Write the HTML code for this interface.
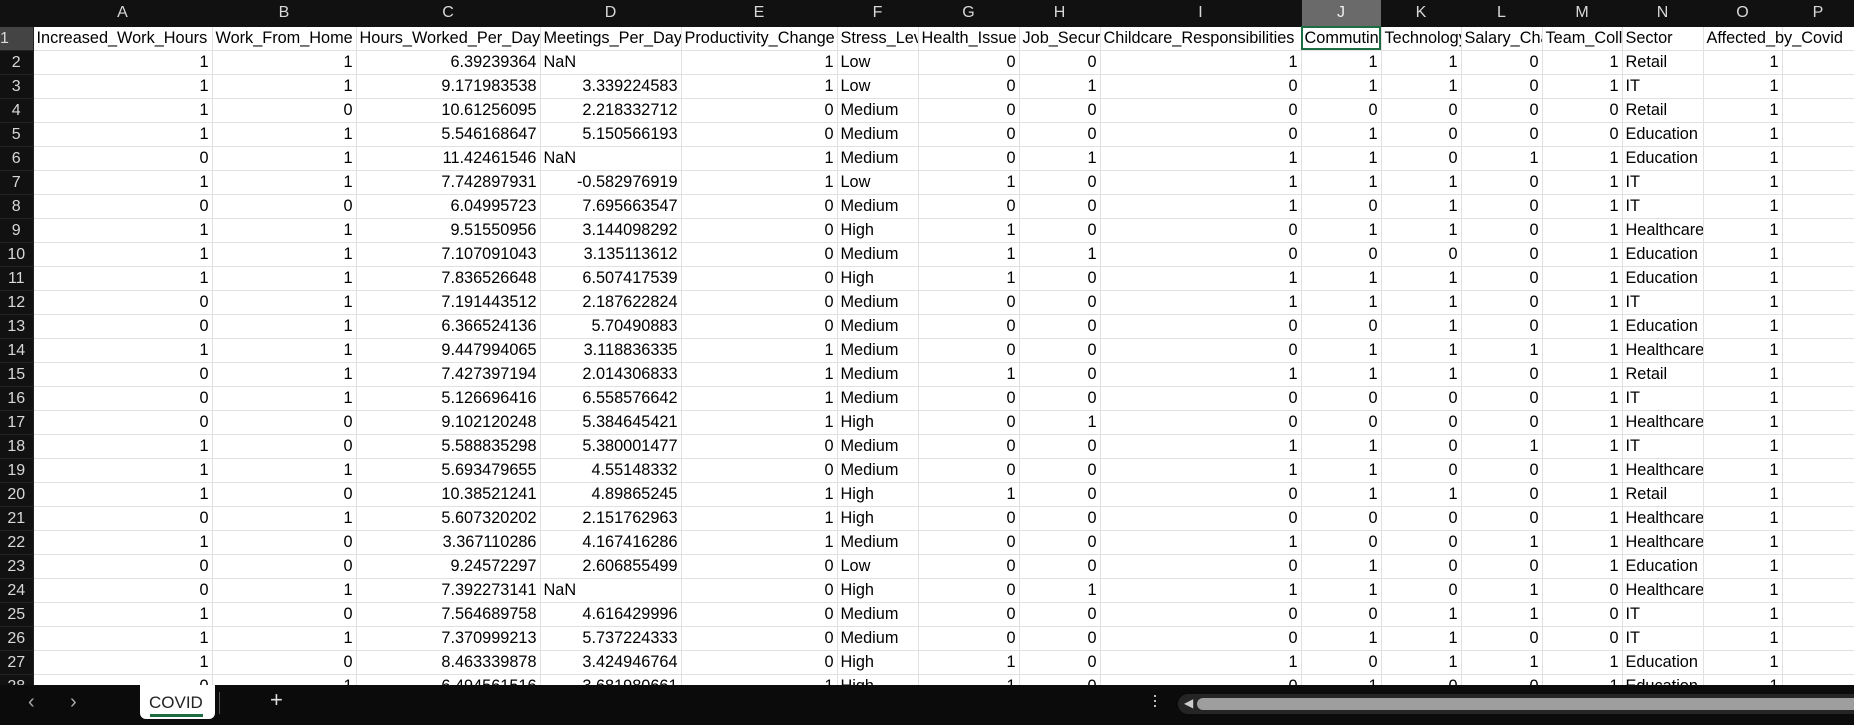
<!DOCTYPE html>
<html><head><meta charset="utf-8"><style>
html,body{margin:0;padding:0;background:#fff;width:1854px;height:725px;overflow:hidden;font-family:"Liberation Sans",sans-serif;}
#wrap{position:absolute;left:0;top:0;width:1854px;height:685px;overflow:hidden;background:#fff}
table{border-collapse:collapse;table-layout:fixed;width:1854px}
tr{height:24px}
td{height:23px;padding:0 3px;border-right:1px solid #e1e1e1;border-bottom:1px solid #e1e1e1;white-space:nowrap;overflow:hidden;font-size:16.3px;color:#000;line-height:23px;text-align:right;letter-spacing:0}
td.t{text-align:left}
tr.h{height:26px}
tr.h td{height:25px;background:#111;color:#d8d8d8;text-align:center;border-color:#111;font-size:16px}
tr.h td.sel{background:#6a6a6a;color:#eee}
td.r{background:#111;color:#d8d8d8;text-align:center;border-color:#222;padding:0;font-size:16px}
td.r.s{background:#444}
tr.f td{text-align:left}
td.j1{outline:2px solid #1e6c41;outline-offset:-2px}
td.ov{overflow:visible}
#bar{position:absolute;left:0;top:685px;width:1854px;height:40px;background:#0b0b0b;color:#ccc}
</style></head><body>
<div id="wrap"><table>
<colgroup><col style="width:33px"><col style="width:179px"><col style="width:144px"><col style="width:184px"><col style="width:141px"><col style="width:156px"><col style="width:81px"><col style="width:101px"><col style="width:81px"><col style="width:201px"><col style="width:80px"><col style="width:80px"><col style="width:81px"><col style="width:80px"><col style="width:81px"><col style="width:79px"><col style="width:72px"></colgroup>
<tr class="h"><td></td><td>A</td><td>B</td><td>C</td><td>D</td><td>E</td><td>F</td><td>G</td><td>H</td><td>I</td><td class="sel">J</td><td>K</td><td>L</td><td>M</td><td>N</td><td>O</td><td>P</td></tr>
<tr class="f"><td class="r s">1</td><td>Increased_Work_Hours</td><td>Work_From_Home</td><td>Hours_Worked_Per_Day</td><td>Meetings_Per_Day</td><td>Productivity_Change</td><td>Stress_Level</td><td>Health_Issue</td><td>Job_Security</td><td>Childcare_Responsibilities</td><td class="j1">Commuting_Changes</td><td>Technology_Adaptation</td><td>Salary_Changes</td><td>Team_Collaboration</td><td>Sector</td><td class="ov">Affected_by_Covid</td><td></td></tr>
<tr><td class="r">2</td><td>1</td><td>1</td><td>6.39239364</td><td class="t">NaN</td><td>1</td><td class="t">Low</td><td>0</td><td>0</td><td>1</td><td>1</td><td>1</td><td>0</td><td>1</td><td class="t">Retail</td><td>1</td><td></td></tr>
<tr><td class="r">3</td><td>1</td><td>1</td><td>9.171983538</td><td>3.339224583</td><td>1</td><td class="t">Low</td><td>0</td><td>1</td><td>0</td><td>1</td><td>1</td><td>0</td><td>1</td><td class="t">IT</td><td>1</td><td></td></tr>
<tr><td class="r">4</td><td>1</td><td>0</td><td>10.61256095</td><td>2.218332712</td><td>0</td><td class="t">Medium</td><td>0</td><td>0</td><td>0</td><td>0</td><td>0</td><td>0</td><td>0</td><td class="t">Retail</td><td>1</td><td></td></tr>
<tr><td class="r">5</td><td>1</td><td>1</td><td>5.546168647</td><td>5.150566193</td><td>0</td><td class="t">Medium</td><td>0</td><td>0</td><td>0</td><td>1</td><td>0</td><td>0</td><td>0</td><td class="t">Education</td><td>1</td><td></td></tr>
<tr><td class="r">6</td><td>0</td><td>1</td><td>11.42461546</td><td class="t">NaN</td><td>1</td><td class="t">Medium</td><td>0</td><td>1</td><td>1</td><td>1</td><td>0</td><td>1</td><td>1</td><td class="t">Education</td><td>1</td><td></td></tr>
<tr><td class="r">7</td><td>1</td><td>1</td><td>7.742897931</td><td>-0.582976919</td><td>1</td><td class="t">Low</td><td>1</td><td>0</td><td>1</td><td>1</td><td>1</td><td>0</td><td>1</td><td class="t">IT</td><td>1</td><td></td></tr>
<tr><td class="r">8</td><td>0</td><td>0</td><td>6.04995723</td><td>7.695663547</td><td>0</td><td class="t">Medium</td><td>0</td><td>0</td><td>1</td><td>0</td><td>1</td><td>0</td><td>1</td><td class="t">IT</td><td>1</td><td></td></tr>
<tr><td class="r">9</td><td>1</td><td>1</td><td>9.51550956</td><td>3.144098292</td><td>0</td><td class="t">High</td><td>1</td><td>0</td><td>0</td><td>1</td><td>1</td><td>0</td><td>1</td><td class="t">Healthcare</td><td>1</td><td></td></tr>
<tr><td class="r">10</td><td>1</td><td>1</td><td>7.107091043</td><td>3.135113612</td><td>0</td><td class="t">Medium</td><td>1</td><td>1</td><td>0</td><td>0</td><td>0</td><td>0</td><td>1</td><td class="t">Education</td><td>1</td><td></td></tr>
<tr><td class="r">11</td><td>1</td><td>1</td><td>7.836526648</td><td>6.507417539</td><td>0</td><td class="t">High</td><td>1</td><td>0</td><td>1</td><td>1</td><td>1</td><td>0</td><td>1</td><td class="t">Education</td><td>1</td><td></td></tr>
<tr><td class="r">12</td><td>0</td><td>1</td><td>7.191443512</td><td>2.187622824</td><td>0</td><td class="t">Medium</td><td>0</td><td>0</td><td>1</td><td>1</td><td>1</td><td>0</td><td>1</td><td class="t">IT</td><td>1</td><td></td></tr>
<tr><td class="r">13</td><td>0</td><td>1</td><td>6.366524136</td><td>5.70490883</td><td>0</td><td class="t">Medium</td><td>0</td><td>0</td><td>0</td><td>0</td><td>1</td><td>0</td><td>1</td><td class="t">Education</td><td>1</td><td></td></tr>
<tr><td class="r">14</td><td>1</td><td>1</td><td>9.447994065</td><td>3.118836335</td><td>1</td><td class="t">Medium</td><td>0</td><td>0</td><td>0</td><td>1</td><td>1</td><td>1</td><td>1</td><td class="t">Healthcare</td><td>1</td><td></td></tr>
<tr><td class="r">15</td><td>0</td><td>1</td><td>7.427397194</td><td>2.014306833</td><td>1</td><td class="t">Medium</td><td>1</td><td>0</td><td>1</td><td>1</td><td>1</td><td>0</td><td>1</td><td class="t">Retail</td><td>1</td><td></td></tr>
<tr><td class="r">16</td><td>0</td><td>1</td><td>5.126696416</td><td>6.558576642</td><td>1</td><td class="t">Medium</td><td>0</td><td>0</td><td>0</td><td>0</td><td>0</td><td>0</td><td>1</td><td class="t">IT</td><td>1</td><td></td></tr>
<tr><td class="r">17</td><td>0</td><td>0</td><td>9.102120248</td><td>5.384645421</td><td>1</td><td class="t">High</td><td>0</td><td>1</td><td>0</td><td>0</td><td>0</td><td>0</td><td>1</td><td class="t">Healthcare</td><td>1</td><td></td></tr>
<tr><td class="r">18</td><td>1</td><td>0</td><td>5.588835298</td><td>5.380001477</td><td>0</td><td class="t">Medium</td><td>0</td><td>0</td><td>1</td><td>1</td><td>0</td><td>1</td><td>1</td><td class="t">IT</td><td>1</td><td></td></tr>
<tr><td class="r">19</td><td>1</td><td>1</td><td>5.693479655</td><td>4.55148332</td><td>0</td><td class="t">Medium</td><td>0</td><td>0</td><td>1</td><td>1</td><td>0</td><td>0</td><td>1</td><td class="t">Healthcare</td><td>1</td><td></td></tr>
<tr><td class="r">20</td><td>1</td><td>0</td><td>10.38521241</td><td>4.89865245</td><td>1</td><td class="t">High</td><td>1</td><td>0</td><td>0</td><td>1</td><td>1</td><td>0</td><td>1</td><td class="t">Retail</td><td>1</td><td></td></tr>
<tr><td class="r">21</td><td>0</td><td>1</td><td>5.607320202</td><td>2.151762963</td><td>1</td><td class="t">High</td><td>0</td><td>0</td><td>0</td><td>0</td><td>0</td><td>0</td><td>1</td><td class="t">Healthcare</td><td>1</td><td></td></tr>
<tr><td class="r">22</td><td>1</td><td>0</td><td>3.367110286</td><td>4.167416286</td><td>1</td><td class="t">Medium</td><td>0</td><td>0</td><td>1</td><td>0</td><td>0</td><td>1</td><td>1</td><td class="t">Healthcare</td><td>1</td><td></td></tr>
<tr><td class="r">23</td><td>0</td><td>0</td><td>9.24572297</td><td>2.606855499</td><td>0</td><td class="t">Low</td><td>0</td><td>0</td><td>0</td><td>1</td><td>0</td><td>0</td><td>1</td><td class="t">Education</td><td>1</td><td></td></tr>
<tr><td class="r">24</td><td>0</td><td>1</td><td>7.392273141</td><td class="t">NaN</td><td>0</td><td class="t">High</td><td>0</td><td>1</td><td>1</td><td>1</td><td>0</td><td>1</td><td>0</td><td class="t">Healthcare</td><td>1</td><td></td></tr>
<tr><td class="r">25</td><td>1</td><td>0</td><td>7.564689758</td><td>4.616429996</td><td>0</td><td class="t">Medium</td><td>0</td><td>0</td><td>0</td><td>0</td><td>1</td><td>1</td><td>0</td><td class="t">IT</td><td>1</td><td></td></tr>
<tr><td class="r">26</td><td>1</td><td>1</td><td>7.370999213</td><td>5.737224333</td><td>0</td><td class="t">Medium</td><td>0</td><td>0</td><td>0</td><td>1</td><td>1</td><td>0</td><td>0</td><td class="t">IT</td><td>1</td><td></td></tr>
<tr><td class="r">27</td><td>1</td><td>0</td><td>8.463339878</td><td>3.424946764</td><td>0</td><td class="t">High</td><td>1</td><td>0</td><td>1</td><td>0</td><td>1</td><td>1</td><td>1</td><td class="t">Education</td><td>1</td><td></td></tr>
<tr><td class="r">28</td><td>0</td><td>1</td><td>6.494561516</td><td>3.681980661</td><td>1</td><td class="t">High</td><td>1</td><td>0</td><td>0</td><td>1</td><td>0</td><td>0</td><td>1</td><td class="t">Education</td><td>1</td><td></td></tr>
</table></div>
<div id="bar">
<div style="position:absolute;left:28px;top:6px;font-size:20px;color:#aaa">&#8249;</div>
<div style="position:absolute;left:70px;top:6px;font-size:20px;color:#aaa">&#8250;</div>
<div style="position:absolute;left:140px;top:0;width:75px;height:34px;background:#fff;border-radius:0 0 6px 6px"></div>
<div style="position:absolute;left:149px;top:8px;font-size:17px;color:#222">COVID</div>
<div style="position:absolute;left:150px;top:29px;width:53px;height:3px;background:#1e6c41"></div>
<div style="position:absolute;left:219px;top:7px;width:1px;height:22px;background:#555"></div>
<div style="position:absolute;left:270px;top:2px;font-size:22px;color:#ddd">+</div>
<div style="position:absolute;left:1154px;top:10px;width:2px;height:2px;background:#bbb;box-shadow:0 5px 0 #bbb,0 10px 0 #bbb"></div>
<div style="position:absolute;left:1178px;top:9px;width:676px;height:20px;background:#252525;border-radius:10px 0 0 10px"></div>
<div style="position:absolute;left:1184px;top:11px;font-size:12px;color:#ccc">&#9664;</div>
<div style="position:absolute;left:1197px;top:13px;width:657px;height:12px;background:#9e9e9e;border-radius:6px 0 0 6px"></div>
</div>
</body></html>
